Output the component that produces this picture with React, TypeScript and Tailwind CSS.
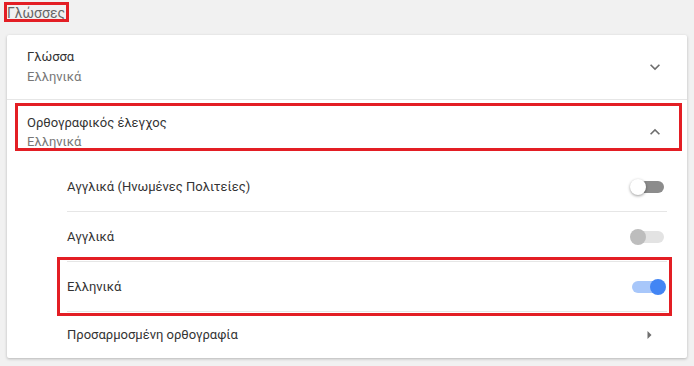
import React from "react";

function Toggle({ state }: { state: "off" | "disabled" | "on" }) {
  const track =
    state === "on" ? "bg-[#a8c7fa]" : state === "disabled" ? "bg-[#e3e3e3]" : "bg-[#8c8c8c]";
  const knob =
    state === "on"
      ? "right-0 bg-[#4285f4]"
      : state === "disabled"
      ? "left-0 bg-[#bdbdbd]"
      : "left-0 bg-white shadow-[0_1px_3px_rgba(0,0,0,0.4)]";
  return (
    <div className="relative w-[36px] h-[16px] mr-[1px]">
      <div className={`absolute left-[2px] right-[2px] top-[2px] h-[12px] rounded-full ${track}`} />
      <div className={`absolute top-0 w-[16px] h-[16px] rounded-full ${knob}`} />
    </div>
  );
}

function Chevron({ up }: { up?: boolean }) {
  return (
    <svg width="20" height="20" viewBox="0 0 24 24" className={`mr-[2px] ${up ? "rotate-180" : ""}`}>
      <path d="M7.41 8.59 12 13.17l4.59-4.58L18 10l-6 6-6-6z" fill="#6e6e6e" />
    </svg>
  );
}

function SubRow({ label, children, last }: { label: string; children: React.ReactNode; last?: boolean }) {
  return (
    <div
      className={`flex items-center justify-between ${
        last ? "h-[46px]" : "h-[50px] border-b border-[#e6e6e6]"
      }`}
    >
      <span className="text-[13px] text-[#333]">{label}</span>
      {children}
    </div>
  );
}

export default function App() {
  return (
    <div
      className="relative w-[694px] h-[366px] bg-[#f1f1f1] overflow-hidden"
      style={{ fontFamily: "Roboto, 'Noto Sans', sans-serif" }}
    >
      {/* Heading */}
      <div className="pl-[7px] pt-[3px] h-[35px] text-[14px] leading-[20px] text-[#666]">Γλώσσες</div>

      {/* Card */}
      <div className="ml-[7px] w-[680px] h-[323px] bg-white rounded-[2px] shadow-[0_1px_3px_rgba(0,0,0,0.25)]">
        <div className="flex items-center justify-between h-[65px] px-[20px] border-b border-[#e6e6e6]">
          <div className="flex flex-col leading-[20px] text-[13px]">
            <span className="text-[#333]">Γλώσσα</span>
            <span className="text-[#777]">Ελληνικά</span>
          </div>
          <Chevron />
        </div>

        <div className="flex items-center justify-between h-[62px] px-[20px] pt-[2px]">
          <div className="flex flex-col leading-[19px] text-[13px]">
            <span className="text-[#333]">Ορθογραφικός έλεγχος</span>
            <span className="text-[#777]">Ελληνικά</span>
          </div>
          <Chevron up />
        </div>

        <div className="ml-[60px] mr-[20px]">
          <SubRow label="Αγγλικά (Ηνωμένες Πολιτείες)">
            <Toggle state="off" />
          </SubRow>
          <SubRow label="Αγγλικά">
            <Toggle state="disabled" />
          </SubRow>
          <SubRow label="Ελληνικά">
            <Toggle state="on" />
          </SubRow>
          <SubRow label="Προσαρμοσμένη ορθογραφία" last>
            <svg width="24" height="24" viewBox="0 0 24 24" className="mr-[6px]">
              <path d="M10.5 16l4-4-4-4z" fill="#6e6e6e" />
            </svg>
          </SubRow>
        </div>
      </div>

      {/* Red annotation boxes */}
      <div className="absolute left-[4px] top-[2px] w-[65px] h-[20px] border-[3px] border-[#e31e24]" />
      <div className="absolute left-[15px] top-[103px] w-[667px] h-[48px] border-[3px] border-[#e31e24]" />
      <div className="absolute left-[57px] top-[257px] w-[615px] h-[59px] border-[3px] border-[#e31e24]" />
    </div>
  );
}
